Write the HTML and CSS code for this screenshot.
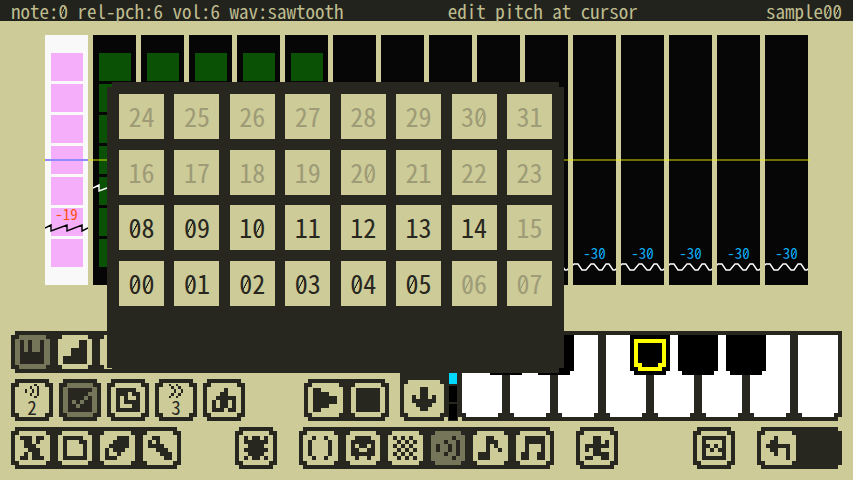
FILE: index.html
```html
<!DOCTYPE html>
<html lang="en">
<head>
<meta charset="utf-8">
<title>sample00</title>
<link rel="stylesheet" href="styles.css">
</head>
<body>
<header class="status">
  <span>note:<span class="zero">0</span> rel-pch:6 vol:6 wav:sawtooth</span>
  <span class="hint">edit pitch at cursor</span>
  <span>sample<span class="zero">0</span><span class="zero">0</span></span>
</header>
<main>
  <section class="chart" id="chart" aria-label="Notes"></section>

  <section class="controls">
    <div class="upper">
      <div class="left">
        <div class="row">
          <div class="group three">
            <button class="cell on" data-icon="piano" aria-label="Keys"></button>
            <button class="cell" data-icon="stairs" aria-label="Steps"></button>
            <button class="cell" aria-label="Blank"></button>
          </div>
        </div>
        <div class="row tight">
          <div class="group one"><button class="cell counted" data-icon="sound">2</button></div>
          <div class="group one"><button class="cell on" data-icon="check" aria-label="Enable"></button></div>
          <div class="group one"><button class="cell" data-icon="clock" aria-label="Timing"></button></div>
          <div class="group one"><button class="cell counted" data-icon="chevrons">3</button></div>
          <div class="group one"><button class="cell" data-icon="export" aria-label="Export"></button></div>
          <div class="group two push">
            <button class="cell" data-icon="play" aria-label="Play"></button>
            <button class="cell" data-icon="stop" aria-label="Stop"></button>
          </div>
        </div>
      </div>
      <div class="keys">
        <div class="dropper"><button class="cell" data-icon="down" aria-label="Close"></button></div>
        <div class="meter"><i></i><i></i><i class="lit"></i><i></i><i></i></div>
        <div class="piano" id="piano"></div>
      </div>
    </div>
    <div class="row">
      <div class="group four">
        <button class="cell" data-icon="cross" aria-label="Cut"></button>
        <button class="cell" data-icon="page" aria-label="New"></button>
        <button class="cell" data-icon="eraser" aria-label="Erase"></button>
        <button class="cell" data-icon="wrench" aria-label="Settings"></button>
      </div>
      <div class="group one bug"><button class="cell" data-icon="bug" aria-label="Bug"></button></div>
      <div class="group six">
        <button class="cell" data-icon="parens" aria-label="Code"></button>
        <button class="cell" data-icon="skull" aria-label="Sprite"></button>
        <button class="cell" data-icon="checker" aria-label="Map"></button>
        <button class="cell on" data-icon="sound" aria-label="Sound"></button>
        <button class="cell" data-icon="note" aria-label="Pattern"></button>
        <button class="cell" data-icon="beam" aria-label="Music"></button>
      </div>
      <div class="group one"><button class="cell" data-icon="runner" aria-label="Run"></button></div>
      <div class="group one push"><button class="cell" data-icon="picture" aria-label="Capture"></button></div>
      <div class="group two">
        <button class="cell" data-icon="undo" aria-label="Undo"></button>
      </div>
    </div>
  </section>

  <div class="popup" id="popup"></div>
</main>
<script src="app.js"></script>
</body>
</html>
```
FILE: styles.css
```css
* { box-sizing: border-box; }

:root {
  --paper: #cdcb98;
  --ink: #272720;
  --dim: #757559;
  --mono: "Noto Sans Mono CJK JP", "DejaVu Sans Mono", monospace;
}

body {
  margin: 0;
  background: var(--paper);
  color: var(--ink);
  font-family: var(--mono);
}

button {
  margin: 0;
  padding: 0;
  border: 0;
  color: inherit;
  font: inherit;
}

/* slash through the digit zero */
.zero {
  background: linear-gradient(to bottom right, transparent 43%, currentColor 46%, currentColor 54%, transparent 57%) center 55% / 46% 32% no-repeat;
}

.status {
  display: flex;
  justify-content: space-between;
  padding: 0 11px;
  background: #23231e;
  color: #bfbd8e;
  font-size: 19px;
  line-height: 21px;
  white-space: pre;
}
.status .hint { padding-right: 24px; }

main {
  position: relative;
  display: flow-root;
}

/* note columns */
.chart {
  position: relative;
  display: grid;
  grid-template-columns: repeat(16, 1fr);
  gap: 5px;
  height: 250px;
  margin: 14px 45px 46px;
}
.chart::after {
  content: "";
  position: absolute;
  top: 124px;
  left: -2px;
  right: -2px;
  height: 2px;
  background: rgba(240, 240, 0, .45);
}
.note {
  position: relative;
  padding: 18px 5px 0 6px;
  background: #060606;
}
.block {
  height: 28px;
  margin-bottom: 3px;
  background: #0a5105;
}
.note.cursor { background: #f9f9f9; }
.cursor .block { background: #f5aefa; }
.cursor::after {
  content: "";
  position: absolute;
  z-index: 1;
  top: 124px;
  left: 0;
  right: 0;
  height: 2px;
  background: #9089ff;
}
.pitch {
  position: absolute;
  left: 0;
  right: 0;
  color: #0eaaf0;
  font-size: 15px;
  line-height: 16px;
  text-align: center;
}
.cursor .pitch { color: #ff4f10; }
.wave {
  position: absolute;
  left: 0;
  width: 100%;
  height: 10px;
  fill: none;
  stroke: #fff;
  stroke-width: 1.4;
}
.cursor .wave { stroke: #000; }

/* buttons */
.controls {
  display: flex;
  flex-direction: column;
  gap: 6px;
  padding: 0 11px;
}
.upper { display: flex; justify-content: space-between; gap: 11px; }
.left { display: flex; flex: 1; flex-direction: column; gap: 6px; }
.row { display: flex; gap: 22px; }
.tight { gap: 6px; }
.push { margin-left: auto; }
.bug { margin-left: 32px; }

.group, .dropper, .popup, .cell {
  --notch: 4px;
  --face: var(--ink);
  background:
    linear-gradient(var(--face), var(--face)) var(--notch) 0 / calc(100% - 2 * var(--notch)) 100% no-repeat,
    linear-gradient(var(--face), var(--face)) 0 var(--notch) / 100% calc(100% - 2 * var(--notch)) no-repeat;
}
.group {
  display: grid;
  gap: 8px;
  height: 42px;
  padding: 4px;
}
.one { width: 42px; }
.two { grid-template-columns: 1fr 1fr; width: 85px; }
.three { grid-template-columns: repeat(3, 1fr); width: 128px; }
.four { grid-template-columns: repeat(4, 1fr); width: 170px; }
.six { grid-template-columns: repeat(6, 1fr); width: 255px; }

.cell {
  --face: var(--paper);
  display: flex;
  flex-direction: column;
  align-items: center;
  justify-content: center;
}
.cell.on { --face: var(--dim); }
.icon { width: 24px; height: 24px; fill: var(--ink); }
.counted { font-size: 19px; line-height: 18px; }
.counted .icon { width: 14px; height: 14px; }

/* keyboard */
.keys { display: flex; width: 442px; height: 90px; }
.dropper { width: 48px; padding: 49px 4px 4px; }
.dropper .cell { width: 40px; height: 37px; }
.meter {
  display: flex;
  flex-direction: column;
  justify-content: flex-end;
  gap: 2px;
  width: 10px;
  padding: 1px;
  background: var(--ink);
}
.meter i { height: 16px; background: #000; }
.meter .lit { background: #00d8ff; }
.piano {
  display: flex;
  flex: 1;
  gap: 8px;
  padding: 4px;
  background:
    linear-gradient(var(--ink), var(--ink)) 4px 0 / calc(100% - 8px) 100% no-repeat,
    linear-gradient(var(--ink), var(--ink)) 0 0 / 100% calc(100% - 4px) no-repeat;
}
.key { position: relative; flex: 1; }
.white {
  display: block;
  width: 100%;
  height: 100%;
  background:
    linear-gradient(#fff, #fff) 4px 0 / calc(100% - 8px) 100% no-repeat,
    linear-gradient(#fff, #fff) 0 0 / 100% calc(100% - 4px) no-repeat;
}
.black {
  position: absolute;
  z-index: 1;
  top: 0;
  right: -24px;
  width: 40px;
  height: 40px;
  background:
    linear-gradient(#000, #000) 0 0 / 100% 36px no-repeat,
    linear-gradient(#000, #000) 4px 0 / 32px 100% no-repeat;
}
.black svg { display: block; margin: 0 4px; }

/* number picker */
.popup {
  --notch: 5px;
  position: absolute;
  z-index: 2;
  top: 61px;
  left: 107px;
  display: grid;
  grid-template-columns: repeat(8, 45px);
  grid-auto-rows: 45px;
  align-content: space-between;
  justify-content: space-between;
  width: 457px;
  height: 291px;
  padding: 12px 12px 67px;
}
.popup button {
  padding-bottom: 2px;
  background: var(--paper);
  font-size: 26px;
  line-height: 43px;
}
.popup button:disabled { color: #9e9b77; }
```
FILE: app.js
```js
const ICONS = {
  piano: "#.#..#/#.#..#/#.#..#/######/######/######",
  stairs: "....##/....##/..####/..####/######/######",
  check: "######/#####./####.#/#.#.##/##.###/######",
  clock: "#####./###.##/#.#..#/#.####/#...##/######",
  export: "...#../..##../.#####/#.##.#/#.##.#/###.##",
  play: "##..../####../######/######/####../##....",
  stop: "######/######/######/######/######/######",
  down: "..##../..##../#.##.#/######/.####./..##..",
  cross: "###.##/.##.#./.###../..###./.#.##./##.###",
  page: "#####./#...##/#....#/#....#/#....#/######",
  eraser: "...###/..####/.#####/#.###./#..#../###...",
  wrench: ".##.../#.#.../####../..###./...###/....##",
  bug: "#.##.#/######/.####./######/.####./#.##.#",
  parens: ".#..#./#....#/#....#/#....#/#....#/.#..#.",
  skull: ".####./######/#.##.#/##..##/######/.#..#.",
  checker: "#.#.#./.#.#.#/#.#.#./.#.#.#/#.#.#./.#.#.#",
  sound: "....#./..#..#/#..#.#/#..#.#/..#..#/....#.",
  chevrons: "#..#../.#..#./..#..#/..#..#/.#..#./#..#..",
  note: "..##../..###./..#.#./..#..#/###.../###...",
  beam: ".#####/.#####/.#...#/.#...#/##..##/##..##",
  runner: "..##../..##.#/######/#.##../..####/##..##",
  picture: "######/#....#/##.#.#/#.#.##/#....#/######",
  undo: "..#.../.##.../######/.##..#/..#..#/.....#"
};

function icon(name) {
  let d = "";
  ICONS[name].split("/").forEach((line, y) => {
    for (const run of line.matchAll(/#+/g)) {
      d += `M${run.index} ${y}h${run[0].length}v1h-${run[0].length}z`;
    }
  });
  return `<svg class="icon" viewBox="0 0 6 6" shape-rendering="crispEdges" aria-hidden="true"><path d="${d}"/></svg>`;
}

const slashed = (text) => text.replace(/0/g, '<span class="zero">0</span>');

document.querySelectorAll("[data-icon]").forEach((el) => {
  el.insertAdjacentHTML("afterbegin", icon(el.dataset.icon));
});

// Note columns: volume blocks, pitch label and wave shape.
const SAW = "M0 5L6 2V8L22 2V8L37 2V8L43 5";
const SINE = "M-1 4L1 2H5L9 8H13L18 2H21L26 8H29L33 2H36L40 8H42L44 6";
let notes = "";
for (let i = 0; i < 16; i++) {
  const cursor = i === 0;
  const filled = i < 6;
  const top = cursor ? 188 : i === 1 ? 148 : 227;
  const label = cursor ? "-19" : i > 10 ? "-30" : "";
  notes += `<div class="note${cursor ? " cursor" : ""}">`
    + (filled ? '<div class="block"></div>'.repeat(7) : "")
    + (label ? `<span class="pitch" style="top:${top - 17}px">${slashed(label)}</span>` : "")
    + (filled && i > 1 ? "" : `<svg class="wave" viewBox="0 0 43 10" preserveAspectRatio="none" style="top:${top}px"><path d="${filled ? SAW : SINE}"/></svg>`)
    + "</div>";
}
document.getElementById("chart").innerHTML = notes;

// One octave of keys.
const ring = '<svg width="32" height="32" viewBox="0 0 8 8" fill="#ff0" shape-rendering="crispEdges"><path d="M0 0h8v7h-1v1h-6v-1h-1zM1 1v5h1v1h4v-1h1v-5z" fill-rule="evenodd"/></svg>';
let keys = "";
"CDEFGABc".split("").forEach((name) => {
  const sharp = "CDFGA".includes(name);
  keys += `<div class="key"><button class="white" aria-label="${name}"></button>`
    + (sharp ? `<button class="black" aria-label="${name} sharp">${name === "F" ? ring : ""}</button>` : "")
    + "</div>";
});
document.getElementById("piano").innerHTML = keys;

// Number picker, highest row first.
const enabled = (n) => n < 6 || (n > 7 && n < 15);
let cells = "";
for (let row = 3; row >= 0; row--) {
  for (let col = 0; col < 8; col++) {
    const n = row * 8 + col;
    cells += `<button${enabled(n) ? "" : " disabled"}>${slashed(String(n).padStart(2, "0"))}</button>`;
  }
}
document.getElementById("popup").innerHTML = cells;
```
